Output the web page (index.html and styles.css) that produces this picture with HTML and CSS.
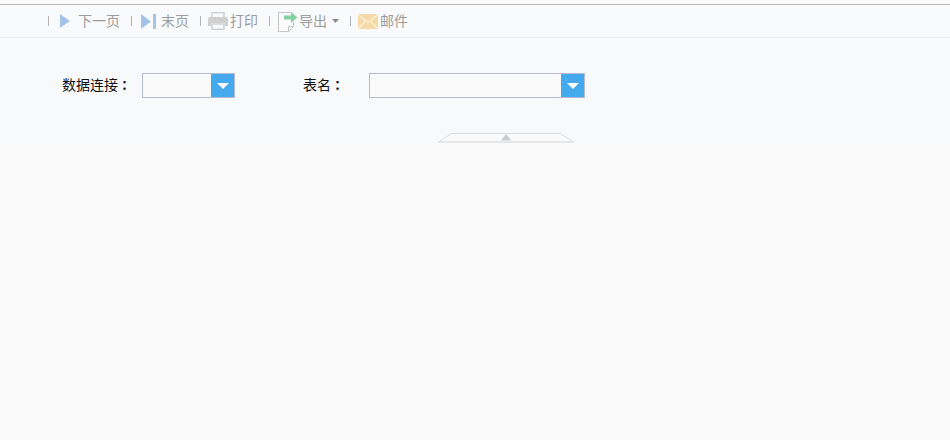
FILE: index.html
```html
<!DOCTYPE html>
<html lang="zh">
<head>
<meta charset="utf-8">
<title>报表</title>
<link rel="stylesheet" href="styles.css">
</head>
<body>
<div class="toolbar">
  <span class="sep s1"></span>
  <svg class="icon next" width="10" height="14" viewBox="0 0 10 14"><path d="M0 0L10 7L0 14Z" fill="#a3c4e8"/></svg>
  <span class="tool t-next">下一页</span>
  <span class="sep s2"></span>
  <svg class="icon last" width="15" height="15" viewBox="0 0 15 15"><path d="M0 0L10 7.5L0 15Z" fill="#a3c4e8"/><rect x="12" y="0" width="3" height="15" fill="#a3c4e8"/></svg>
  <span class="tool t-last">末页</span>
  <span class="sep s3"></span>
  <svg class="icon print" width="20" height="18" viewBox="0 0 20 18"><rect x="4" y="0.7" width="12" height="6" fill="none" stroke="#cfcfcf" stroke-width="1.4"/><path d="M2 5h16a2 2 0 0 1 2 2v7h-3v-3H3v3H0V7a2 2 0 0 1 2-2z" fill="#cfcfcf"/><rect x="4" y="12" width="12" height="5.3" fill="none" stroke="#cfcfcf" stroke-width="1.4"/></svg>
  <span class="tool t-print">打印</span>
  <span class="sep s4"></span>
  <svg class="icon export" width="20" height="21" viewBox="0 0 20 21"><path d="M0.5 1.5H13M0.5 1.5V20.5H10.5L15.5 15.5V11M15.5 15.5H10.5V20.5" fill="#fbfbfb" stroke="#c4c4c4"/><path d="M6 4.5H13V1L19.5 6.5L13 12V8.5H6Z" fill="#86cfa0"/></svg>
  <span class="tool t-export">导出</span>
  <svg class="caret" width="7" height="4" viewBox="0 0 7 4"><path d="M0 0H7L3.500 4Z" fill="#8a8a8a"/></svg>
  <span class="sep s5"></span>
  <svg class="icon mail" width="20" height="15" viewBox="0 0 20 15"><rect width="20" height="15" rx="1.500" fill="#f6d9a6"/><path d="M0.500 1L10 8.500L19.500 1M0.500 14.500L7.500 7M19.500 14.500L12.500 7" fill="none" stroke="#fdf2dc" stroke-width="1.200"/></svg>
  <span class="tool">邮件</span>
</div>
<div class="panel">
  <div class="form">
    <label class="label first">数据连接<span class="colon" lang="zh-TW">：</span></label>
    <div class="combo small"><span class="field"></span><span class="btn"><i class="arrow"></i></span></div>
    <label class="label second">表名<span class="colon" lang="zh-TW">：</span></label>
    <div class="combo large"><span class="field"></span><span class="btn"><i class="arrow"></i></span></div>
  </div>
  <svg class="handle" width="136" height="10" viewBox="0 0 136 10"><path d="M0.500 9L13.500 0.500H122.500L135.500 9" fill="#fafafb" stroke="#dcdde0"/><path d="M0 9H136" stroke="#e6e7e9" stroke-width="2"/><path d="M63 7.500L68 1L73 7.500Z" fill="#cacbcd"/></svg>
</div>
</body>
</html>
```
FILE: styles.css
```css
html, body {
  margin: 0;
  padding: 0;
  height: 100%;
  overflow: hidden;
  background: #fafafb;
  font-family: "Noto Sans CJK SC", "Liberation Sans", sans-serif;
  font-size: 14px;
}
.toolbar {
  display: flex;
  align-items: center;
  box-sizing: border-box;
  height: 34px;
  margin-top: 4px;
  padding: 0 0 0 48px;
  background: #f9fafb;
  border-top: 1px solid #b9b9b9;
  border-bottom: 1px solid #eaeef5;
  color: #9c9c9c;
}
.tool { line-height: 20px; padding-bottom: 2px; white-space: nowrap; }
.sep { width: 1px; height: 10px; background: #b4b4b4; flex: none; }
.icon, .caret { flex: none; }
.next { margin-left: 11px; }
.t-next { margin-left: 8px; }
.s2 { margin-left: 11px; }
.last { margin-left: 9px; }
.t-last { margin-left: 5px; }
.s3 { margin-left: 11px; }
.print { margin-left: 7px; }
.t-print { margin-left: 2px; }
.s4 { margin-left: 11px; }
.export { margin-left: 8px; }
.t-export { margin-left: 1px; }
.caret { margin-left: 5px; }
.s5 { margin-left: 11px; }
.mail { margin-left: 7px; margin-right: 2px; }
.panel {
  height: 105px;
  background: #f8f9fb;
}
.form {
  display: flex;
  align-items: center;
  padding: 35px 0 0 62px;
  color: #111;
}
.label {
  line-height: 23px;
  padding-bottom: 2px;
  white-space: nowrap;
}
.colon {
  font-family: "Noto Sans CJK TC", "Liberation Sans", sans-serif;
  font-size: 13px;
  font-weight: 700;
}
.first { width: 80px; }
.second { width: 65px; margin-left: 68px; }
.combo {
  display: flex;
  box-sizing: border-box;
  height: 25px;
  border: 1px solid #b4bacf;
  background: #fafafb;
}
.small { width: 93px; }
.large { width: 216px; margin-left: 1px; }
.field { flex: 1; }
.btn {
  display: flex;
  align-items: center;
  justify-content: center;
  width: 23px;
  background: #45a9ee;
}
.arrow {
  width: 0;
  height: 0;
  border-left: 6px solid transparent;
  border-right: 6px solid transparent;
  border-top: 6px solid #fff;
}
.handle {
  display: block;
  margin: 35px 0 0 438px;
}
```
